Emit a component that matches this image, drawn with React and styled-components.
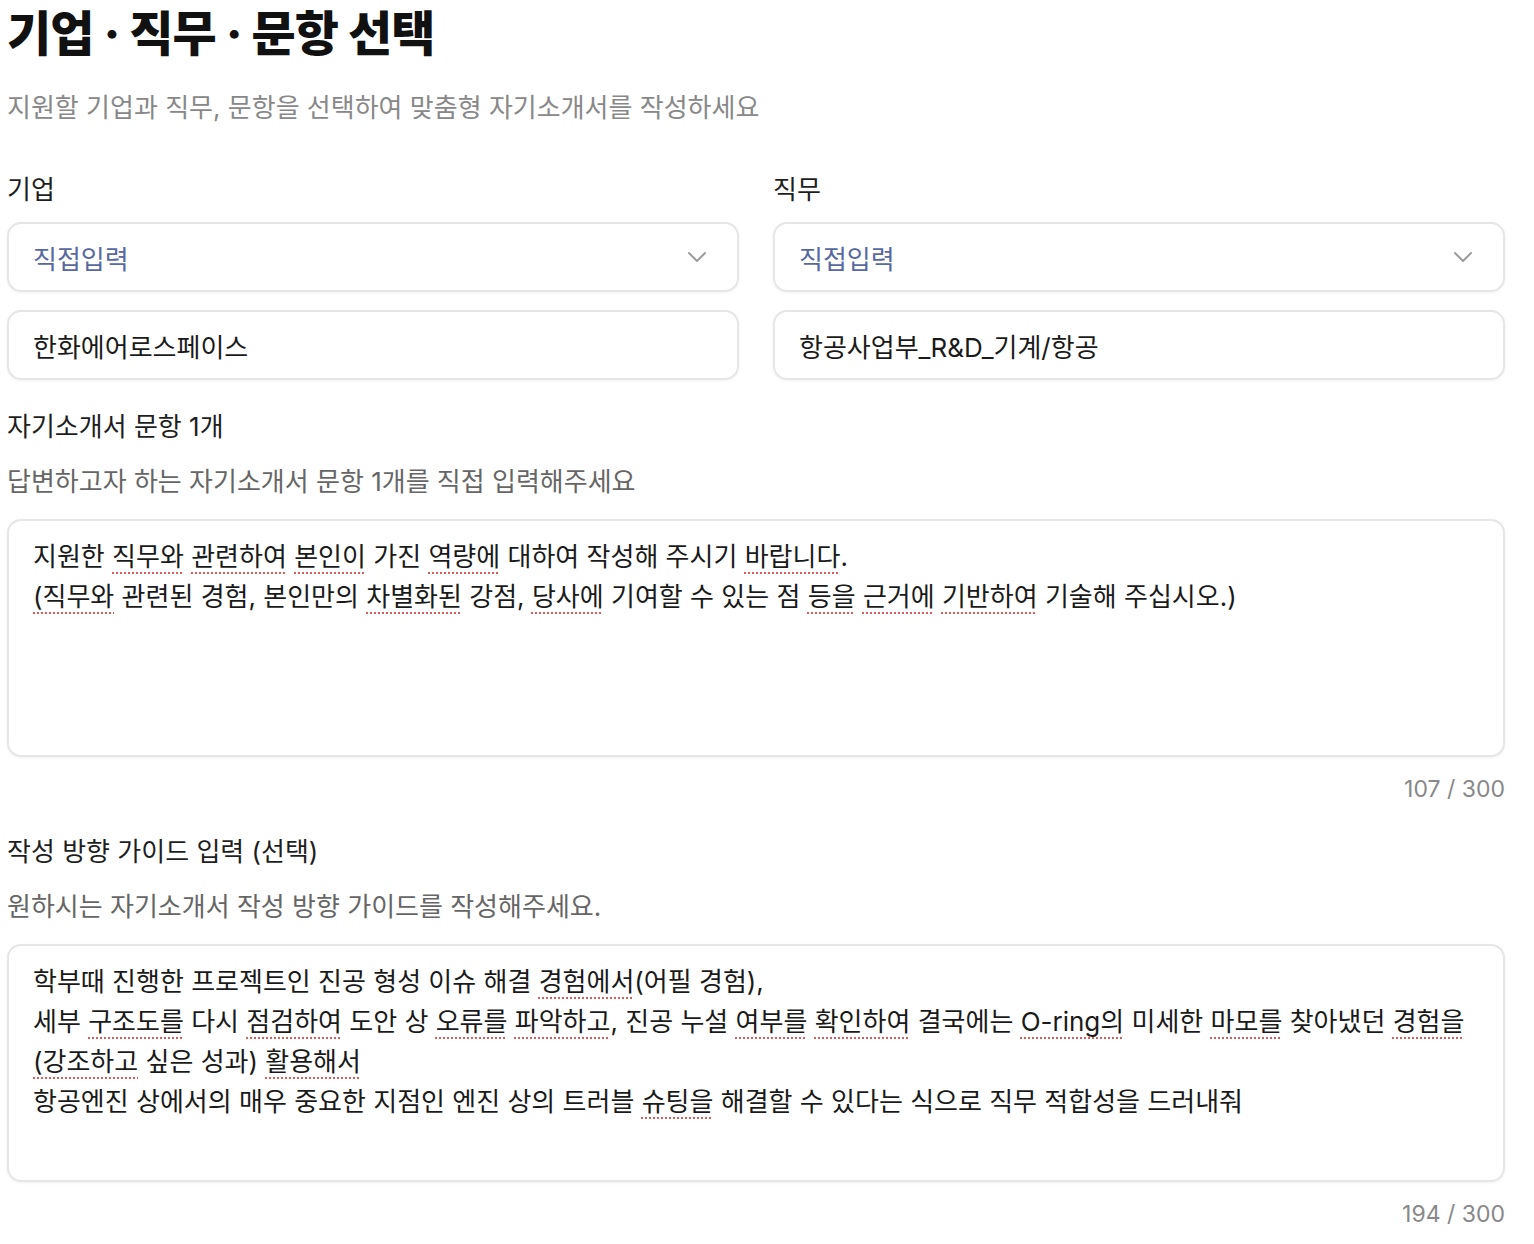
import styled, { createGlobalStyle } from "styled-components"

const GlobalStyle = createGlobalStyle`
    html, body {
        margin: 0;
        padding: 0;
        background: #ffffff;
    }
    body {
        font-family: "Inter", "Noto Sans CJK KR", sans-serif;
        color: #111111;
    }
`

const Page = styled.main`
    width: 1498px;
    padding: 4px 0 20px 7px;
`

const Title = styled.h1`
    margin: 0;
    font-size: 48px;
    line-height: 60px;
    font-weight: 800;
    color: #111111;
    letter-spacing: -0.8px;
`

const Subtitle = styled.p`
    margin: 27px 0 0;
    font-size: 26px;
    line-height: 34px;
    color: #888888;
`

const Columns = styled.div`
    display: grid;
    grid-template-columns: 1fr 1fr;
    column-gap: 34px;
    margin-top: 48px;
`

const Column = styled.div`
    display: flex;
    flex-direction: column;
`

const Label = styled.div`
    font-size: 26px;
    line-height: 34px;
    color: #1e1e1e;
    margin-top: ${(p) => p.$top || 0}px;
`

const Helper = styled.div`
    font-size: 26px;
    line-height: 34px;
    color: #666666;
    margin-top: 21px;
`

const Field = styled.div`
    box-sizing: border-box;
    height: 70px;
    display: flex;
    align-items: center;
    justify-content: space-between;
    padding: 0 30px 0 24px;
    border: 2px solid #e6e6e6;
    border-radius: 14px;
    box-shadow: 0 1px 3px rgba(0, 0, 0, 0.06);
    font-size: 26px;
    color: ${(p) => (p.$placeholder ? "#5868a0" : "#1a1a1a")};
    margin-top: ${(p) => p.$top || 0}px;
`

const TextBox = styled.div`
    box-sizing: border-box;
    height: 238px;
    margin-top: 20px;
    padding: 16px 24px;
    border: 2px solid #e6e6e6;
    border-radius: 14px;
    box-shadow: 0 1px 3px rgba(0, 0, 0, 0.06);
    font-size: 26px;
    line-height: 40px;
    color: #1a1a1a;
    white-space: nowrap;
`

const Line = styled.div``

const Typo = styled.span`
    text-decoration: underline dotted #e05a5a;
    text-decoration-thickness: 2px;
    text-underline-offset: 6px;
`

const Counter = styled.div`
    text-align: right;
    font-size: 23px;
    line-height: 30px;
    color: #888888;
    margin-top: 17px;
`

const Chevron = () => (
    <svg width="20" height="12" viewBox="0 0 20 12" fill="none">
        <path d="M2 2l8 8 8-8" stroke="#9c9c9c" strokeWidth="2" strokeLinecap="round" strokeLinejoin="round" />
    </svg>
)

// text split into parts; parts wrapped in [] get the spellcheck underline
const renderLine = (text) =>
    text.split(/(\[[^\]]+\])/).map((part, i) =>
        part.startsWith("[") ? <Typo key={i}>{part.slice(1, -1)}</Typo> : part
    )

const question = [
    "지원한 [직무와] [관련하여] [본인이] 가진 [역량에] 대하여 작성해 주시기 [바랍니다].",
    "[(직무와] 관련된 경험, 본인만의 [차별화된] 강점, [당사에] 기여할 수 있는 점 [등을] [근거에] [기반하여] 기술해 주십시오.)",
]

const guide = [
    "학부때 진행한 프로젝트인 진공 형성 이슈 해결 [경험에서](어필 경험),",
    "세부 [구조도를] 다시 [점검하여] 도안 상 [오류를] [파악하고], 진공 누설 [여부를] [확인하여] 결국에는 [O-ring의] 미세한 [마모를] 찾아냈던 [경험을]",
    "[(강조하고] 싶은 성과) [활용해서]",
    "항공엔진 상에서의 매우 중요한 지점인 엔진 상의 트러블 [슈팅을] 해결할 수 있다는 식으로 직무 적합성을 드러내줘",
]

const App = () => {
    return (
        <>
            <GlobalStyle />
            <Page>
                <Title>기업 · 직무 · 문항 선택</Title>
                <Subtitle>지원할 기업과 직무, 문항을 선택하여 맞춤형 자기소개서를 작성하세요</Subtitle>

                <Columns>
                    <Column>
                        <Label>기업</Label>
                        <Field $placeholder $top={15}>
                            직접입력
                            <Chevron />
                        </Field>
                        <Field $top={18}>한화에어로스페이스</Field>
                    </Column>
                    <Column>
                        <Label>직무</Label>
                        <Field $placeholder $top={15}>
                            직접입력
                            <Chevron />
                        </Field>
                        <Field $top={18}>항공사업부_R&amp;D_기계/항공</Field>
                    </Column>
                </Columns>

                <Label $top={30}>자기소개서 문항 1개</Label>
                <Helper>답변하고자 하는 자기소개서 문항 1개를 직접 입력해주세요</Helper>
                <TextBox>
                    {question.map((l, i) => (
                        <Line key={i}>{renderLine(l)}</Line>
                    ))}
                </TextBox>
                <Counter>107 / 300</Counter>

                <Label $top={31}>작성 방향 가이드 입력 (선택)</Label>
                <Helper>원하시는 자기소개서 작성 방향 가이드를 작성해주세요.</Helper>
                <TextBox>
                    {guide.map((l, i) => (
                        <Line key={i}>{renderLine(l)}</Line>
                    ))}
                </TextBox>
                <Counter>194 / 300</Counter>
            </Page>
        </>
    )
}

export default App
